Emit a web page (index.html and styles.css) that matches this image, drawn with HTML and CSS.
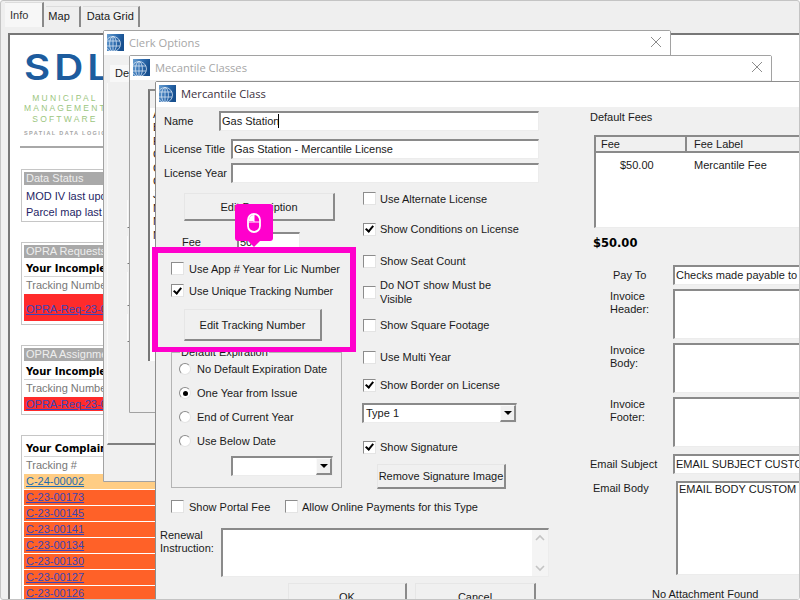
FILE: index.html
```html
<html><head><title>Mercantile Class</title>
<link rel="stylesheet" href="styles.css">
</head>
<body>
    <svg class="defs" width="0" height="0">
        <defs>
            <linearGradient id="globeFill" x1="0" y1="0" x2="1" y2="0.3">
                <stop offset="0" stop-color="#6a9fd0"/>
                <stop offset="0.55" stop-color="#2f6db0"/>
                <stop offset="1" stop-color="#174f8e"/>
            </linearGradient>
            <symbol id="globe" viewBox="0 0 17 17">
                <rect width="17" height="17" fill="url(#globeFill)"/>
                <g fill="none" stroke="#e8f1fa" stroke-width="0.7">
                    <circle cx="6" cy="10" r="7.5"/>
                    <ellipse cx="6" cy="10" rx="3.4" ry="7.5"/>
                    <path d="M6 2.5v15M-1 7h14M-1 12h14"/>
                </g>
            </symbol>
            <symbol id="closeX" viewBox="0 0 12 12">
                <path d="M1 1l10 10M11 1L1 11" fill="none" stroke="#8c8c8c" stroke-width="1"/>
            </symbol>
        </defs>
    </svg>

    <div class="screen">
        <div class="tabs">
            <span class="tab tab-active">Info</span>
            <span class="tab">Map</span>
            <span class="tab tab-grid">Data Grid</span>
        </div>

        <div class="panel">
            <div class="logo">
                <div class="logo-sdl">SDL</div>
                <div class="logo-line logo-first">MUNICIPAL</div>
                <div class="logo-line">MANAGEMENT</div>
                <div class="logo-line">SOFTWARE</div>
                <div class="logo-sub">SPATIAL DATA LOGIC</div>
            </div>
            <div class="rule"></div>

            <div class="box box-status">
                <div class="box-header">Data Status</div>
                <div class="status-row">MOD IV last updated</div>
                <div class="status-row">Parcel map last updated</div>
            </div>

            <div class="box">
                <div class="box-header">OPRA Requests</div>
                <div class="box-title">Your Incomplete</div>
                <div class="box-col">Tracking Number</div>
                <div class="row-red row-tall"><a href="#">OPRA-Req-23-00</a></div>
            </div>

            <div class="box">
                <div class="box-header">OPRA Assignments</div>
                <div class="box-title">Your Incomplete</div>
                <div class="box-col">Tracking Number</div>
                <div class="row-red"><a href="#">OPRA-Req-23-00</a></div>
            </div>

            <div class="box">
                <div class="box-title">Your Complaints</div>
                <div class="box-col">Tracking #</div>
                <div class="row-new"><a href="#">C-24-00002</a></div>
                <div class="row-late"><a href="#">C-23-00173</a></div>
                <div class="row-late"><a href="#">C-23-00145</a></div>
                <div class="row-late"><a href="#">C-23-00141</a></div>
                <div class="row-late"><a href="#">C-23-00134</a></div>
                <div class="row-late"><a href="#">C-23-00130</a></div>
                <div class="row-late"><a href="#">C-23-00127</a></div>
                <div class="row-late"><a href="#">C-23-00126</a></div>
            </div>
        </div>

        <!-- Clerk Options window -->
        <div class="window window-clerk">
            <div class="titlebar title-faded">
                <svg class="globe"><use href="#globe"/></svg>
                <span>Clerk Options</span>
                <svg class="close"><use href="#closeX"/></svg>
            </div>
            <div class="clerk-tab">De</div>
            <div class="clerk-panel">
                <div class="stub stub-first"></div>
                <div class="stub"></div>
                <div class="stub stub-wide"></div>
                <div class="stub"></div>
            </div>
        </div>

        <!-- Mercantile Classes window -->
        <div class="window window-classes">
            <div class="titlebar title-faded">
                <svg class="globe"><use href="#globe"/></svg>
                <span>Mecantile Classes</span>
                <svg class="close"><use href="#closeX"/></svg>
            </div>
            <div class="class-list">
                <div class="class-list-head"></div>
                <div>A</div><div>B</div><div>F</div><div>C</div><div>C</div>
                <div>C</div><div>J</div><div>N</div><div>N</div><div>N</div>
            </div>
        </div>

        <!-- Mercantile Class window -->
        <div class="window window-class">
            <div class="titlebar titlebar-active">
                <svg class="globe"><use href="#globe"/></svg>
                <span>Mercantile Class</span>
            </div>
            <div class="class-body">
                <div class="class-main">
                    <div class="form-row">
                        <label class="label-name">Name</label>
                        <input type="text" class="input-name" value="Gas Station">
                        <span class="caret"></span>
                    </div>
                    <div class="form-row form-row-title">
                        <label class="label-title">License Title</label>
                        <input type="text" class="input-title" value="Gas Station - Mercantile License">
                    </div>
                    <div class="form-row form-row-year">
                        <label class="label-title">License Year</label>
                        <input type="text" class="input-title">
                    </div>

                    <div class="columns">
                        <div class="col-left">
                            <button class="btn btn-desc">Edit Description</button>
                            <div class="fee-row">
                                <label class="label-fee">Fee</label>
                                <input type="text" class="input-fee" value="50">
                            </div>
                            <label class="check-row check-first"><input type="checkbox">Use App # Year for Lic Number</label>
                            <label class="check-row check-second"><input type="checkbox" checked>Use Unique Tracking Number</label>
                            <button class="btn btn-tracking">Edit Tracking Number</button>

                            <fieldset class="group">
                                <legend>Default Expiration</legend>
                                <label class="radio-row radio-first"><input type="radio" name="expire">No Default Expiration Date</label>
                                <label class="radio-row"><input type="radio" name="expire" checked>One Year from Issue</label>
                                <label class="radio-row"><input type="radio" name="expire">End of Current Year</label>
                                <label class="radio-row"><input type="radio" name="expire">Use Below Date</label>
                                <div class="combo combo-date">
                                    <span class="combo-value"></span>
                                    <span class="combo-btn"></span>
                                </div>
                            </fieldset>
                        </div>

                        <div class="col-mid">
                            <label class="check-row"><input type="checkbox">Use Alternate License</label>
                            <label class="check-row"><input type="checkbox" checked>Show Conditions on License</label>
                            <label class="check-row"><input type="checkbox">Show Seat Count</label>
                            <label class="check-row"><input type="checkbox"><span class="check-wrap">Do NOT show Must be Visible</span></label>
                            <label class="check-row"><input type="checkbox">Show Square Footage</label>
                            <label class="check-row"><input type="checkbox">Use Multi Year</label>
                            <label class="check-row"><input type="checkbox" checked>Show Border on License</label>
                            <div class="combo combo-type">
                                <span class="combo-value">Type 1</span>
                                <span class="combo-btn"></span>
                            </div>
                            <label class="check-row"><input type="checkbox" checked>Show Signature</label>
                            <button class="btn btn-signature">Remove Signature Image</button>
                        </div>
                    </div>

                    <div class="portal-row">
                        <label class="check-row check-portal"><input type="checkbox">Show Portal Fee</label>
                        <label class="check-row"><input type="checkbox">Allow Online Payments for this Type</label>
                    </div>

                    <div class="renewal-row">
                        <label class="label-renewal">Renewal<br>Instruction:</label>
                        <div class="renewal-box">
                            <textarea></textarea>
                            <div class="scrollbar">
                                <svg width="12" height="8" viewBox="0 0 12 8"><path d="M2 6l4-4 4 4" fill="none" stroke="#c4c4c4" stroke-width="1.6"/></svg>
                                <svg width="12" height="8" viewBox="0 0 12 8"><path d="M2 2l4 4 4-4" fill="none" stroke="#c4c4c4" stroke-width="1.6"/></svg>
                            </div>
                        </div>
                    </div>

                    <div class="action-row">
                        <button class="btn btn-ok">OK</button>
                        <button class="btn btn-cancel">Cancel</button>
                    </div>
                </div>

                <div class="class-side">
                    <div class="side-heading">Default Fees</div>
                    <div class="fee-list">
                        <div class="fee-list-head">
                            <span class="fee-col-a">Fee</span>
                            <span class="fee-col-b">Fee Label</span>
                        </div>
                        <div class="fee-list-row">
                            <span class="fee-amount">$50.00</span>
                            <span>Mercantile Fee</span>
                        </div>
                    </div>
                    <div class="fee-total">$50.00</div>

                    <div class="side-row side-pay">
                        <label class="label-pay">Pay To</label>
                        <input type="text" class="side-field" value="Checks made payable to Spatial Data Logic">
                    </div>
                    <div class="side-row side-text">
                        <label class="label-invoice">Invoice<br>Header:</label>
                        <textarea class="side-field side-area"></textarea>
                    </div>
                    <div class="side-row side-text">
                        <label class="label-invoice">Invoice<br>Body:</label>
                        <textarea class="side-field side-area"></textarea>
                    </div>
                    <div class="side-row side-text">
                        <label class="label-invoice">Invoice<br>Footer:</label>
                        <textarea class="side-field side-area"></textarea>
                    </div>
                    <div class="side-row side-subject">
                        <label class="label-subject">Email Subject</label>
                        <input type="text" class="side-field" value="EMAIL SUBJECT CUSTOM TEXT">
                    </div>
                    <div class="side-row side-email">
                        <label class="label-email">Email Body</label>
                        <textarea class="side-field email-area">EMAIL BODY CUSTOM TEXT</textarea>
                    </div>
                    <div class="no-attachment">No Attachment Found</div>
                </div>
            </div>
        </div>

        <!-- Walkthrough highlight -->
        <div class="highlight"></div>
        <div class="callout">
            <svg width="14" height="20" viewBox="0 0 14 20">
                <rect x="1" y="1" width="12" height="18" rx="6" fill="none" stroke="#fff" stroke-width="1.8"/>
                <path d="M2 8V7a5 5 0 0 1 5-5v6z" fill="#fff"/>
                <path d="M7 1v8M1 9h12" stroke="#fff" stroke-width="1"/>
            </svg>
        </div>
    </div>
</body></html>
```

FILE: styles.css
```css
body {
    margin: 0;
    width: 800px;
    height: 600px;
    overflow: hidden;
    font-family: 'Liberation Sans', Arial, sans-serif;
    font-size: 11px;
    color: #1a1a1a;
}

.defs {
    position: absolute;
}

.screen {
    position: relative;
    width: 800px;
    height: 600px;
    box-sizing: border-box;
    overflow: hidden;
    background: #efefef;
    border: 1px solid #c4c4c4;
    border-radius: 3px;
}

/* Main tabs and dashboard */

.tabs {
    display: flex;
    align-items: flex-end;
    height: 26px;
    padding: 0 0 0 4px;
    gap: 2px;
    margin-bottom: 6px;
}

.tab {
    display: block;
    padding: 3px 9px 2px 2px;
    height: 15px;
    border-right: 2px solid #8a8a8a;
    border-top: 1px solid #dcdcdc;
}

.tab-active {
    padding: 6px 14px 3px 5px;
    background: #f7f7f7;
    color: #333;
}

.tab-grid {
    padding: 3px 4px 2px 4px;
}

.panel {
    height: 566px;
    margin-left: 7px;
    background: #fff;
    border-top: 2px solid #777;
    border-left: 2px solid #777;
    overflow: hidden;
}

.logo {
    width: 82px;
    margin-left: 14px;
    padding-top: 16px;
    text-align: center;
}

.logo-sdl {
    height: 32px;
    line-height: 32px;
    font-family: Inter, sans-serif;
    font-size: 35px;
    font-weight: 600;
    letter-spacing: 3.5px;
    text-align: left;
    color: #1d5c9e;
    transform: scaleX(1.15);
    transform-origin: left center;
}

.logo-line {
    height: 10.5px;
    line-height: 10.5px;
    font-size: 8.5px;
    letter-spacing: 2.2px;
    white-space: nowrap;
    color: #9cc680;
}

.logo-first {
    margin-top: 9.5px;
}

.logo-sub {
    height: 10px;
    line-height: 10px;
    margin-top: 4px;
    font-size: 5.5px;
    font-weight: bold;
    letter-spacing: 1.4px;
    white-space: nowrap;
    color: #a6a6a6;
}

.rule {
    height: 2px;
    margin: 8px 0 0 10px;
    background: #a8a8a8;
}

.box {
    width: 300px;
    margin: 20px 0 0 11px;
    padding: 2px 2px 3px;
    border: 1px solid #c6c6c6;
}

.box-status {
    margin-top: 21px;
    padding-bottom: 1px;
}

.box-header {
    height: 13px;
    line-height: 13px;
    padding-left: 2px;
    background: #a9a9a9;
    color: #eee;
}

.status-row {
    height: 16px;
    line-height: 16px;
    padding-left: 2px;
    color: #1f1f66;
}

.box-header + .status-row {
    margin-top: 3px;
}

.box-title {
    height: 14px;
    line-height: 14px;
    margin-top: 4px;
    padding-left: 2px;
    font-family: 'DejaVu Sans', sans-serif;
    font-size: 10px;
    font-weight: bold;
    color: #000;
    border-bottom: 1px solid #d4d4d4;
}

.box-col {
    height: 16px;
    line-height: 16px;
    padding-left: 2px;
    color: #777;
    margin-bottom: 1px;
}

.row-red,
.row-new,
.row-late {
    height: 15px;
    line-height: 15px;
    padding-left: 2px;
    margin-bottom: 1px;
}

.row-red {
    height: 14px;
    line-height: 14px;
    margin-bottom: 0;
    background: #ff2b2b;
}

.row-tall {
    height: 27px;
    line-height: 30px;
}

.row-new {
    background: #ffcd84;
}

.row-late {
    background: #ff6128;
}

.row-red a,
.row-late a {
    color: #3a45b8;
}

.row-new a {
    color: #1f6bb0;
}

/* Windows */

.window {
    position: absolute;
    box-sizing: border-box;
    background: #f0f0f0;
    border: 1px solid #a2a2a2;
    border-radius: 2px 2px 0 0;
}

.window-clerk {
    left: 102px;
    top: 29px;
    width: 568px;
    height: 452px;
}

.window-classes {
    left: 128px;
    top: 54px;
    width: 643px;
    height: 358px;
}

.window-class {
    left: 154px;
    top: 80px;
    width: 660px;
    height: 530px;
    border-color: #8e8e8e;
}

.titlebar {
    display: flex;
    align-items: center;
    box-sizing: border-box;
    height: 24px;
    padding: 0 8px 2px 3px;
    gap: 5px;
    background: #fff;
    font-family: 'Open Sans', sans-serif;
    font-size: 11.2px;
    color: #3b3040;
}

.titlebar-active {
    height: 25px;
    padding-bottom: 3px;
}

.title-faded {
    color: #a6a6a6;
}

.globe {
    width: 17px;
    height: 17px;
}

.close {
    width: 12px;
    height: 12px;
    margin-left: auto;
}

.clerk-tab {
    width: 24px;
    height: 17px;
    line-height: 17px;
    margin: 10px 0 0 6px;
    padding-left: 5px;
    background: #f8f8f8;
}

.clerk-panel {
    display: flow-root;
    height: 360px;
    margin: 1px 0 0 3px;
    border-left: 1px solid #fafafa;
    border-bottom: 2px solid #808080;
}

.stub {
    width: 12px;
    height: 27px;
    margin: 8px 0 0 19px;
    border-left: 1px solid #fbfbfb;
    border-bottom: 1px solid #777;
}

.stub-first {
    margin-top: 117px;
}

.stub-wide {
    height: 33px;
}

.class-list {
    width: 600px;
    height: 272px;
    margin: 9px 0 0 18px;
    padding-left: 3px;
    box-sizing: border-box;
    background: #fff;
    border-left: 2px solid #777;
    border-top: 2px solid #8a8a8a;
    line-height: 13.4px;
}

.class-list-head {
    height: 17px;
    margin-left: -3px;
    background: #efefef;
}

/* Mercantile Class form */

.class-body {
    display: flex;
    height: 504px;
}

.class-main {
    width: 429px;
    flex: none;
    padding-top: 4px;
}

input[type="text"],
textarea {
    display: block;
    box-sizing: border-box;
    height: 20px;
    padding: 0 0 2px 1px;
    margin: 0;
    font: inherit;
    color: #1a1a1a;
    background: #fff;
    border-style: solid;
    border-width: 2px 1px 1px 2px;
    border-color: #8a8a8a #ececec #ececec #8a8a8a;
    border-radius: 0;
    outline: none;
    resize: none;
    overflow: hidden;
}

label {
    white-space: nowrap;
}

.form-row {
    position: relative;
    display: flex;
    align-items: center;
    padding-left: 8px;
}

.form-row-title {
    margin-top: 8px;
}

.form-row-year {
    margin-top: 4px;
}

.label-name {
    width: 55px;
}

.label-title {
    width: 67px;
}

.input-name {
    width: 320px;
}

.input-title {
    width: 308px;
}

.caret {
    position: absolute;
    left: 122px;
    top: 3px;
    width: 1px;
    height: 14px;
    background: #000;
}

.columns {
    display: flex;
}

.col-left {
    width: 204px;
    flex: none;
    padding-top: 10px;
}

.btn {
    display: block;
    box-sizing: border-box;
    padding: 0;
    font: inherit;
    white-space: nowrap;
    color: #1a1a1a;
    background: #f0f0f0;
    border-style: solid;
    border-width: 1px 2px 2px 1px;
    border-color: #e6e6e6 #8a8a8a #8a8a8a #e6e6e6;
}

.btn-desc {
    width: 151px;
    height: 28px;
    margin-left: 28px;
}

.fee-row {
    display: flex;
    align-items: center;
    margin: 11px 0 0 26px;
}

.label-fee {
    width: 55px;
}

.input-fee {
    width: 63px;
}

.check-row {
    display: flex;
    align-items: center;
    gap: 5px;
}

input[type="checkbox"] {
    appearance: none;
    position: relative;
    flex: none;
    box-sizing: border-box;
    width: 13px;
    height: 13px;
    margin: 0;
    background: #fff;
    border-style: solid;
    border-width: 1px;
    border-color: #8c8c8c #e4e4e4 #e4e4e4 #8c8c8c;
}

input[type="checkbox"]:checked::after {
    content: "";
    position: absolute;
    left: 2.5px;
    top: 0.5px;
    width: 3px;
    height: 6px;
    border: solid #000;
    border-width: 0 2px 2px 0;
    transform: rotate(40deg);
}

.check-first {
    margin: 10px 0 0 15px;
}

.check-second {
    margin: 9px 0 0 15px;
}

.btn-tracking {
    width: 138px;
    height: 32px;
    margin: 12px 0 0 28px;
}

.group {
    box-sizing: border-box;
    width: 171px;
    height: 143px;
    margin: 4px 0 0 15px;
    padding: 0;
    border: 1px solid #b4b4b4;
    min-inline-size: 0;
}

.group legend {
    margin-left: 8px;
    padding: 0 1px;
    height: 14px;
    line-height: 14px;
}

.radio-row {
    display: flex;
    align-items: center;
    gap: 6px;
    height: 12px;
    margin: 12px 0 0 7px;
}

.radio-first {
    margin-top: 4px;
}

input[type="radio"] {
    appearance: none;
    position: relative;
    flex: none;
    box-sizing: border-box;
    width: 12px;
    height: 12px;
    margin: 0;
    background: #fff;
    border: 1px solid;
    border-color: #8c8c8c #e4e4e4 #e4e4e4 #8c8c8c;
    border-radius: 50%;
}

input[type="radio"]:checked::after {
    content: "";
    position: absolute;
    left: 2.5px;
    top: 2.5px;
    width: 5px;
    height: 5px;
    border-radius: 50%;
    background: #000;
}

.combo {
    display: flex;
    box-sizing: border-box;
    height: 20px;
    background: #fff;
    border-style: solid;
    border-width: 2px 1px 1px 2px;
    border-color: #8a8a8a #ececec #ececec #8a8a8a;
}

.combo-value {
    flex: 1;
    line-height: 17px;
    padding-left: 2px;
}

.combo-btn {
    display: flex;
    align-items: center;
    justify-content: center;
    box-sizing: border-box;
    width: 16px;
    background: #f0f0f0;
    border-style: solid;
    border-width: 1px 2px 2px 1px;
    border-color: #fafafa #8a8a8a #8a8a8a #fafafa;
}

.combo-btn::after {
    content: "";
    border-style: solid;
    border-width: 4px 4px 0;
    border-color: #000 transparent transparent;
}

.combo-date {
    width: 102px;
    margin: 9px 0 0 59px;
}

.col-mid {
    display: grid;
    grid-template-rows: 31px 30px 34px 28px 38px 26px 30px 30px 34px 32px;
    align-items: center;
    padding: 0 0 0 3px;
}

.col-mid .check-row {
    gap: 4px;
}

.check-wrap {
    width: 122px;
    line-height: 14px;
    white-space: normal;
}

.combo-type {
    align-self: start;
    width: 155px;
    margin: 3px 0 0 -1px;
}

.btn-signature {
    align-self: start;
    width: 129px;
    height: 25px;
    margin: 0 0 0 14px;
}

.portal-row {
    display: flex;
    margin: 4px 0 0 15px;
}

.portal-row .check-row:last-child {
    gap: 4px;
}

.check-portal {
    width: 114px;
}

.renewal-row {
    display: flex;
    margin-top: 15px;
}

.label-renewal {
    display: block;
    width: 61px;
    margin: 0 0 0 4px;
    padding-top: 1px;
    line-height: 13px;
}

.renewal-box {
    display: flex;
    box-sizing: border-box;
    width: 328px;
    height: 49px;
    background: #fff;
    border-style: solid;
    border-width: 2px 1px 1px 2px;
    border-color: #8a8a8a #ececec #ececec #8a8a8a;
}

.renewal-box textarea {
    flex: 1;
    height: 100%;
    border: 0;
}

.scrollbar {
    display: flex;
    flex-direction: column;
    justify-content: space-between;
    align-items: center;
    width: 16px;
    padding: 4px 0;
    box-sizing: border-box;
    background: #f4f4f4;
}

.action-row {
    display: flex;
    gap: 8px;
    margin: 6px 0 0 132px;
}

.btn-ok {
    width: 119px;
    height: 28px;
}

.btn-cancel {
    width: 121px;
    height: 28px;
}

/* Right hand column */

.class-side {
    flex: 1;
    padding-top: 3px;
}

.side-heading {
    height: 14px;
    line-height: 14px;
    padding-left: 5px;
}

.fee-list {
    height: 93px;
    margin: 11px 0 0 9px;
    box-sizing: border-box;
    background: #fff;
    border-style: solid;
    border-width: 2px 0 1px 2px;
    border-color: #8a8a8a #ececec #ececec #8a8a8a;
}

.fee-list-head {
    display: flex;
    height: 16px;
    line-height: 15px;
    background: #f0f0f0;
    border-bottom: 2px solid #8a8a8a;
    box-sizing: border-box;
}

.fee-col-a {
    width: 91px;
    box-sizing: border-box;
    padding-left: 5px;
    border-right: 2px solid #8a8a8a;
}

.fee-col-b {
    padding-left: 7px;
}

.fee-list-row {
    display: flex;
    margin-top: 6px;
}

.fee-amount {
    width: 98px;
    padding-left: 24px;
    box-sizing: border-box;
}

.fee-total {
    height: 14px;
    line-height: 14px;
    margin: 8px 0 0 8px;
    font-family: 'DejaVu Sans', sans-serif;
    font-size: 11.5px;
    font-weight: bold;
    color: #000;
}

.side-row {
    display: flex;
    align-items: flex-start;
}

.side-row label {
    display: block;
    width: 88px;
    box-sizing: border-box;
    flex: none;
}

.side-pay {
    margin-top: 15px;
    align-items: center;
}

.side-text {
    margin-top: 4px;
}

.side-subject {
    margin-top: 7px;
    align-items: center;
}

.side-email {
    margin-top: 7px;
}

.side-field {
    width: 200px;
}

textarea.side-area {
    height: 50px;
}

.label-pay {
    padding-left: 28px;
}

.side-row .label-invoice {
    padding-left: 25px;
    padding-top: 1px;
    line-height: 13px;
}

.label-subject {
    padding-left: 5px;
}

.side-row .label-email {
    padding-left: 8px;
    width: 91px;
    padding-top: 1px;
}

textarea.email-area {
    height: 94px;
}

.no-attachment {
    margin: 13px 0 0 67px;
    white-space: nowrap;
}

/* Highlight on top of everything */

.highlight {
    position: absolute;
    left: 151px;
    top: 246px;
    width: 204px;
    height: 105px;
    box-sizing: border-box;
    border: 6px solid #ff00cc;
    border-bottom-width: 5px;
}

.callout {
    position: absolute;
    left: 234px;
    top: 203px;
    display: flex;
    align-items: center;
    justify-content: center;
    width: 38px;
    height: 37px;
    border-radius: 3px;
    background: #ff00cc;
}

.callout::after {
    content: "";
    position: absolute;
    left: 13px;
    top: 37px;
    border-style: solid;
    border-width: 6px 6px 0;
    border-color: #ff00cc transparent transparent;
}
```
